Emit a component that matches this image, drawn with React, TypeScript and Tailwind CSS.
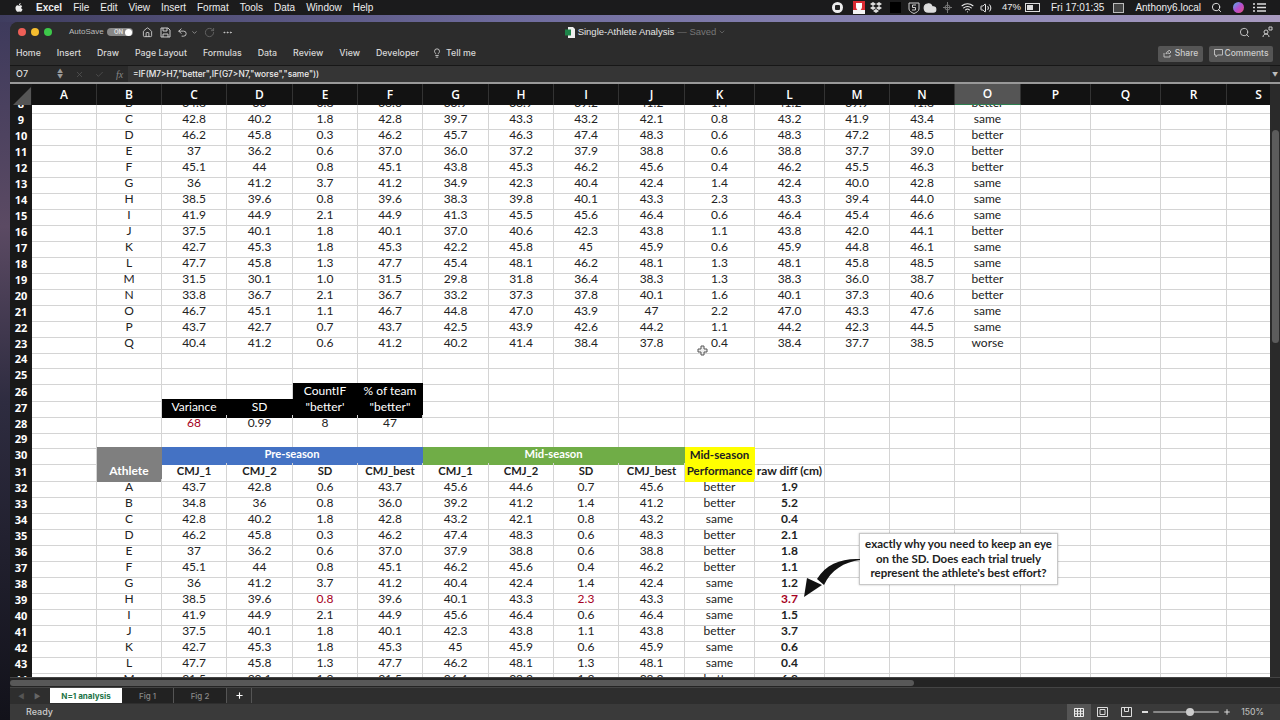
import React from 'react';
import { Home, Undo2, RotateCw, ChevronDown, MoreHorizontal, Lightbulb, Search, X, Check, Volume2, Wifi, Cloud, Plus } from 'lucide-react';

type CellData = { t?: string; c?: string; span?: number };

const COLS = 'grid w-[1312px] grid-cols-[22px_65px_65px_65px_66px_65px_65px_66px_65px_65px_66px_70px_70px_65px_65px_66px_70px_70px_66px_64px]';
const LETTERS = 'ABCDEFGHIJKLMNOPQRS'.split('');
const COUNT = 19;

const TOP: [number, string][] = [
  [8, 'B 34.8 36 0.8 36.0 33.9 36.9 39.2 41.2 1.4 41.2 39.9 41.8 better'],
  [9, 'C 42.8 40.2 1.8 42.8 39.7 43.3 43.2 42.1 0.8 43.2 41.9 43.4 same'],
  [10, 'D 46.2 45.8 0.3 46.2 45.7 46.3 47.4 48.3 0.6 48.3 47.2 48.5 better'],
  [11, 'E 37 36.2 0.6 37.0 36.0 37.2 37.9 38.8 0.6 38.8 37.7 39.0 better'],
  [12, 'F 45.1 44 0.8 45.1 43.8 45.3 46.2 45.6 0.4 46.2 45.5 46.3 better'],
  [13, 'G 36 41.2 3.7 41.2 34.9 42.3 40.4 42.4 1.4 42.4 40.0 42.8 same'],
  [14, 'H 38.5 39.6 0.8 39.6 38.3 39.8 40.1 43.3 2.3 43.3 39.4 44.0 same'],
  [15, 'I 41.9 44.9 2.1 44.9 41.3 45.5 45.6 46.4 0.6 46.4 45.4 46.6 same'],
  [16, 'J 37.5 40.1 1.8 40.1 37.0 40.6 42.3 43.8 1.1 43.8 42.0 44.1 better'],
  [17, 'K 42.7 45.3 1.8 45.3 42.2 45.8 45 45.9 0.6 45.9 44.8 46.1 same'],
  [18, 'L 47.7 45.8 1.3 47.7 45.4 48.1 46.2 48.1 1.3 48.1 45.8 48.5 same'],
  [19, 'M 31.5 30.1 1.0 31.5 29.8 31.8 36.4 38.3 1.3 38.3 36.0 38.7 better'],
  [20, 'N 33.8 36.7 2.1 36.7 33.2 37.3 37.8 40.1 1.6 40.1 37.3 40.6 better'],
  [21, 'O 46.7 45.1 1.1 46.7 44.8 47.0 43.9 47 2.2 47.0 43.3 47.6 same'],
  [22, 'P 43.7 42.7 0.7 43.7 42.5 43.9 42.6 44.2 1.1 44.2 42.3 44.5 same'],
  [23, 'Q 40.4 41.2 0.6 41.2 40.2 41.4 38.4 37.8 0.4 38.4 37.7 38.5 worse'],
];

const BOTTOM: [number, string][] = [
  [32, 'A 43.7 42.8 0.6 43.7 45.6 44.6 0.7 45.6 better 1.9'],
  [33, 'B 34.8 36 0.8 36.0 39.2 41.2 1.4 41.2 better 5.2'],
  [34, 'C 42.8 40.2 1.8 42.8 43.2 42.1 0.8 43.2 same 0.4'],
  [35, 'D 46.2 45.8 0.3 46.2 47.4 48.3 0.6 48.3 better 2.1'],
  [36, 'E 37 36.2 0.6 37.0 37.9 38.8 0.6 38.8 better 1.8'],
  [37, 'F 45.1 44 0.8 45.1 46.2 45.6 0.4 46.2 better 1.1'],
  [38, 'G 36 41.2 3.7 41.2 40.4 42.4 1.4 42.4 same 1.2'],
  [39, 'H 38.5 39.6 0.8 39.6 40.1 43.3 2.3 43.3 same 3.7'],
  [40, 'I 41.9 44.9 2.1 44.9 45.6 46.4 0.6 46.4 same 1.5'],
  [41, 'J 37.5 40.1 1.8 40.1 42.3 43.8 1.1 43.8 better 3.7'],
  [42, 'K 42.7 45.3 1.8 45.3 45 45.9 0.6 45.9 same 0.6'],
  [43, 'L 47.7 45.8 1.3 47.7 46.2 48.1 1.3 48.1 same 0.4'],
  [44, 'M 31.5 30.1 1.0 31.5 36.4 38.3 1.3 38.3 better 6.8'],
];

const RED = 'text-[#a50021]';
const BOLD = 'font-bold text-[11.2px]';
const BLACK = 'bg-black border-black text-white';
const GREY = 'bg-[#7f7f7f] border-[#7f7f7f] text-white font-bold';
const YELLOW = 'bg-[#ffff00] border-[#ffff00] font-bold text-[11.5px]';

const Row = ({ n, cells = [] }: { n: number; cells?: CellData[] }) => {
  const used = cells.reduce((sum, c) => sum + (c.span || 1), 0);
  const all = [...cells, ...Array.from({ length: COUNT - used }, () => ({} as CellData))];
  return (
    <div className={`${COLS} h-4`}>
      <div className="flex items-center justify-center border-b border-[#4a4a4a] bg-[#181818] font-['Open_Sans',sans-serif] text-[11px] font-bold text-white">{n}</div>
      {all.map((c, i) => (
        <div
          key={i}
          className={`flex items-center justify-center whitespace-nowrap border-r border-b ${c.c?.includes('border-') ? '' : 'border-[#d4d4d4]'} ${c.span === 4 ? 'col-span-4' : ''} ${c.c || ''}`}
        >
          <span className="-translate-y-px">{c.t}</span>
        </div>
      ))}
    </div>
  );
};

const topCells = (s: string): CellData[] => [{}, ...s.split(' ').map((t) => ({ t }))];

const bottomCells = (n: number, s: string): CellData[] => {
  const parts = s.split(' ');
  return [
    {},
    ...parts.map((t, i) => {
      let c = i === 10 ? 'font-bold' : '';
      if (n === 39 && (i === 3 || i === 7 || i === 10)) c += ` ${RED}`;
      return { t, c };
    }),
  ];
};

const Sheet = () => (
  <div className="-mt-[10px] font-['Lato',sans-serif] text-[12px] text-[#222]">
    {TOP.map(([n, s]) => <Row key={n} n={n} cells={topCells(s)} />)}
    <Row n={24} />
    <Row n={25} />
    <Row n={26} cells={[{}, {}, {}, {}, { t: 'CountIF', c: BLACK }, { t: '% of team', c: BLACK }]} />
    <Row n={27} cells={[{}, {}, { t: 'Variance', c: BLACK }, { t: 'SD', c: BLACK }, { t: '"better\'', c: BLACK }, { t: '"better"', c: BLACK }]} />
    <Row n={28} cells={[{}, {}, { t: '68', c: RED }, { t: '0.99' }, { t: '8' }, { t: '47' }]} />
    <Row n={29} />
    <Row n={30} cells={[
      {},
      { c: GREY },
      { t: 'Pre-season', span: 4, c: `bg-[#4472c4] border-[#4472c4] text-white ${BOLD}` },
      { t: 'Mid-season', span: 4, c: `bg-[#70ad47] border-[#70ad47] text-white ${BOLD}` },
      { t: 'Mid-season', c: YELLOW },
    ]} />
    <Row n={31} cells={[
      {},
      { t: 'Athlete', c: GREY },
      ...['CMJ_1', 'CMJ_2', 'SD', 'CMJ_best', 'CMJ_1', 'CMJ_2', 'SD', 'CMJ_best'].map((t) => ({ t, c: BOLD })),
      { t: 'Performance', c: YELLOW },
      { t: 'raw diff (cm)', c: 'font-bold' },
    ]} />
    {BOTTOM.map(([n, s]) => <Row key={n} n={n} cells={bottomCells(n, s)} />)}
  </div>
);

const Callout = () => (
  <>
    <div className="absolute left-[849px] top-[428px] flex h-[52px] w-[199px] items-center justify-center border border-[#c8c8c8] bg-white text-center font-['Lato',sans-serif] text-[11.5px] font-bold leading-[14.5px] text-[#222] shadow-[0_0_2px_rgba(0,0,0,0.25)]">
      <span>exactly why you need to keep an eye<br />on the SD. Does each trial truely<br />represent the athlete's best effort?</span>
    </div>
    <svg className="absolute left-[790px] top-[450px]" width="62" height="45" viewBox="0 0 62 45">
      <path d="M60 4 C42 3 26 9 17 24 L24 30 C31 15 44 7 60 5 Z" fill="#111" />
      <path d="M4 42 L7 23 L22 30 Z" fill="#111" />
    </svg>
    <svg className="absolute left-[687px] top-[240px]" width="11" height="11" viewBox="0 0 11 11">
      <path d="M4 1h3v3h3v3H7v3H4V7H1V4h3z" fill="#eee" stroke="#555" strokeWidth="1" />
    </svg>
  </>
);

const MenuBar = () => (
  <div className="flex h-[15px] items-center bg-[#1b1b1c] pl-[14px] pr-[14px] font-['Liberation_Sans',sans-serif] text-[10px] text-[#eee]">
    <svg width="10" height="11" viewBox="0 0 24 24" fill="#eee" className="mr-[12px]">
      <path d="M17.5 12.6c0-2.600 2.100-3.800 2.200-3.900-1.200-1.800-3.100-2-3.700-2-1.600-.2-3.100.9-3.900.9-.8 0-2.100-.9-3.400-.9-1.700 0-3.400 1-4.300 2.600-1.800 3.200-.5 7.900 1.300 10.500.9 1.300 1.900 2.700 3.300 2.600 1.300-.1 1.800-.9 3.400-.9s2 .9 3.400.8c1.400 0 2.300-1.300 3.200-2.600 1-1.500 1.400-2.900 1.400-3-.1 0-2.900-1.100-2.900-4.100zM14.900 4.700c.7-.9 1.200-2.100 1.100-3.300-1 0-2.300.7-3 1.500-.7.8-1.300 2-1.100 3.200 1.100.1 2.300-.6 3-1.400z" />
    </svg>
    <span className="mr-[11px] font-bold">Excel</span>
    <span className="mr-[11px]">File</span>
    <span className="mr-[11px]">Edit</span>
    <span className="mr-[11px]">View</span>
    <span className="mr-[11px]">Insert</span>
    <span className="mr-[11px]">Format</span>
    <span className="mr-[11px]">Tools</span>
    <span className="mr-[11px]">Data</span>
    <span className="mr-[11px]">Window</span>
    <span>Help</span>
    <div className="ml-auto flex items-center">
      <span className="mr-[10px] flex h-[11px] w-[11px] items-center justify-center rounded-full bg-[#eee]"><span className="h-[5px] w-[5px] rounded-[1px] bg-[#222]" /></span>
      <svg width="12" height="13" viewBox="0 0 12 13" className="mr-[5px]"><rect width="12" height="13" fill="#d92a32" /><path d="M3 2h6v4c0 2-1.500 3-3 4C4.500 9 3 8 3 6z" fill="#fff" /><rect y="9" width="12" height="4" fill="#f4f4f4" /></svg>
      <svg width="12" height="11" viewBox="0 0 12 11" fill="#ddd" className="mr-[8px]"><path d="M3 0l3 2-3 2-3-2zM9 0l3 2-3 2-3-2zM3 4l3 2-3 2-3-2zM9 4l3 2-3 2-3-2zM6 7l3 2-3 2-3-2z" /></svg>
      <span className="mr-[7px] h-[11px] w-[11px] bg-black" />
      <svg width="12" height="12" viewBox="0 0 12 12" className="mr-[3px]"><path d="M1 1h10v6c0 2-2.500 3.500-5 4.500C3.500 10.500 1 9 1 7z" fill="none" stroke="#ccc" /><path d="M8 3H4.500v2.500H7.500v2.500H4" fill="none" stroke="#ccc" /></svg>
      <Cloud size={14} fill="#ddd" stroke="#ddd" className="mr-[6px]" />
      <svg width="9" height="11" viewBox="0 0 9 11" className="mr-[9px]"><circle cx="4.500" cy="5.500" r="2.500" fill="none" stroke="#777" /><path d="M4.500 0v11M0 5.500h9" stroke="#777" /></svg>
      <Wifi size={13} className="mr-[6px]" />
      <Volume2 size={12} className="mr-[10px]" />
      <span className="mr-[4px] text-[9.5px]">47%</span>
      <span className="mr-[11px] flex h-[9px] w-[15px] items-center border border-[#ddd] p-px"><span className="h-full w-[6px] bg-[#ddd]" /></span>
      <span className="mr-[9px]">Fri 17:01:35</span>
      <span className="mr-[11px] h-[10px] w-[11px] border border-[#bbb] bg-[#444]" />
      <span className="mr-[10px]">Anthony6.local</span>
      <Search size={11} className="mr-[11px]" />
      <span className="mr-[9px] h-[11px] w-[11px] rounded-full bg-[linear-gradient(135deg,#4fb4e8,#b34fd1,#e8507a)]" />
      <svg width="13" height="9" viewBox="0 0 13 9" stroke="#ddd" strokeWidth="1.300"><path d="M0 1h2M4 1h9M0 4.500h2M4 4.500h9M0 8h2M4 8h9" /></svg>
    </div>
  </div>
);

const TitleBar = () => (
  <div className="grid h-[20px] grid-cols-[1fr_auto_1fr] items-center rounded-tl-lg bg-[#2c2c2c] pl-[8px] pr-[7px] text-[#ccc]">
    <div className="flex items-center">
      <span className="h-[8px] w-[8px] rounded-full bg-[#ee5f57]" />
      <span className="ml-[5px] h-[8px] w-[8px] rounded-full bg-[#f5bd2f]" />
      <span className="ml-[5px] h-[8px] w-[8px] rounded-full bg-[#3dc94a]" />
      <span className="ml-[17px] w-[34px] whitespace-nowrap font-['Liberation_Sans',sans-serif] text-[8px] text-[#bbb]">AutoSave</span>
      <span className="ml-[4px] flex h-[8px] w-[26px] items-center justify-between rounded-full bg-[#888] pl-[7px] pr-px text-[6px] font-bold leading-none text-[#ddd]">ON<span className="h-[7px] w-[7px] rounded-full bg-white" /></span>
      <Home size={11} className="ml-[9px]" />
      <svg width="11" height="11" viewBox="0 0 11 11" fill="none" stroke="#ccc" className="ml-[7px]"><path d="M1 1h7l2 2v7H1z" /><path d="M3 1v3h4V1M3 10V7h5v3" /></svg>
      <Undo2 size={11} className="ml-[6px]" />
      <ChevronDown size={7} className="ml-[3px]" />
      <RotateCw size={11} className="ml-[6px] text-[#666]" />
      <MoreHorizontal size={11} className="ml-[7px]" />
    </div>
    <div className="flex items-center font-['Liberation_Sans',sans-serif] text-[9.5px] text-[#e6e6e6]">
      <svg width="10" height="11" viewBox="0 0 10 11" className="mr-[3px]"><path d="M3 0h5l2 2v9H3z" fill="#eee" /><rect y="2.500" width="6" height="6" fill="#1e8449" /></svg>
      <span>Single-Athlete Analysis</span>
      <span className="ml-[3px] text-[#777]">— Saved</span>
      <ChevronDown size={8} className="ml-[2px] text-[#777]" />
    </div>
    <div className="flex items-center justify-end">
      <Search size={11} className="mr-[12px]" />
      <svg width="11" height="12" viewBox="0 0 11 12" fill="none" stroke="#ccc"><circle cx="4" cy="6" r="2" /><path d="M1 11c0-2 1.500-3 3-3s3 1 3 3M7 1h3v3H7z" /></svg>
    </div>
  </div>
);

const Ribbon = () => (
  <div className="flex h-[23px] items-center bg-[#2c2c2c] pl-[6px] pr-[7px] text-[8.8px] font-medium text-[#d8d8d8]">
    <div className="flex items-center pb-[2px]">
      <span className="mr-[16px]">Home</span>
      <span className="mr-[16px]">Insert</span>
      <span className="mr-[16px]">Draw</span>
      <span className="mr-[16px]">Page Layout</span>
      <span className="mr-[16px]">Formulas</span>
      <span className="mr-[16px]">Data</span>
      <span className="mr-[16px]">Review</span>
      <span className="mr-[16px]">View</span>
      <span className="mr-[13px]">Developer</span>
      <Lightbulb size={10} className="mr-[4px]" />
      <span>Tell me</span>
    </div>
    <span className="ml-auto flex h-[16px] w-[45px] items-center justify-center rounded-[2px] bg-[#555] text-[8.5px] text-[#ccc]">
      <svg width="9" height="9" viewBox="0 0 9 9" fill="none" stroke="#bbb" className="mr-[3px]"><path d="M1 4v4h6V6M3 5c0-2 2-3 3-3V1l2 2-2 2V4C5 4 4 4 3 5z" /></svg>
      Share
    </span>
    <span className="ml-[6px] flex h-[16px] w-[64px] items-center justify-center rounded-[2px] bg-[#555] text-[8.5px] text-[#ccc]">
      <svg width="9" height="9" viewBox="0 0 9 9" fill="none" stroke="#bbb" className="mr-[2px]"><path d="M.5.500h8v5.500H3.500L2 8V6H.5z" /></svg>
      Comments
    </span>
  </div>
);

const FormulaBar = () => (
  <div className="flex h-[17px] items-center border-t border-[#171717] bg-[#2a2a2a] text-[9px] font-medium text-[#ddd]">
    <span className="ml-[6px] w-[39px]">O7</span>
    <span className="flex w-[10px] flex-col items-center text-[6px] leading-[6px] text-[#999]"><span>▲</span><span>▼</span></span>
    <X size={9} className="ml-[10px] text-[#555]" />
    <Check size={9} className="ml-[11px] text-[#555]" />
    <span className="ml-[12px] w-[9px] font-['Liberation_Serif',serif] text-[10px] italic text-[#888]">fx</span>
    <div className="ml-[3px] flex h-full flex-1 items-center bg-[#353535] pl-[5px] text-[8.3px] text-[#eee]">=IF(M7&gt;H7,"better",IF(G7&gt;N7,"worse","same"))</div>
    <span className="flex w-[10px] justify-center text-[6px] text-[#bbb]">▼</span>
  </div>
);

const ColumnHeader = () => (
  <div className="flex border-t-2 border-[#999] bg-[#2a2a2a]">
    <div className="w-[1260px] overflow-hidden">
      <div className={`${COLS} h-[21px] font-['Open_Sans',sans-serif] text-[12px] font-semibold text-white`}>
        <div className="flex items-center justify-center bg-[#181818] pl-[2px] pt-[2px]">
          <svg width="18" height="18" viewBox="0 0 18 18"><path d="M18 0v18H0z" fill="#555" /></svg>
        </div>
        {LETTERS.map((l) => (
          <div key={l} className={`flex items-center justify-center border-r border-[#333] ${l === 'O' ? 'border-b border-b-[#2e7d4f] bg-[#555]' : 'bg-[#121212]'}`}>{l}</div>
        ))}
      </div>
    </div>
    <div className="flex-1" />
  </div>
);

const BottomBars = () => (
  <>
    <div className="h-[10px] border-t border-[#444] bg-[#242424] pr-[366px] pt-[2px]">
      <div className="h-[6px] rounded-full bg-[#585858]" />
    </div>
    <div className="flex h-[17px] items-start border-t border-[#444] bg-[#2e2e2e] text-[8px] font-medium text-[#888]">
      <span className="ml-[8px] mt-[4px] w-[16px] text-[7px] text-[#555]">◀</span>
      <span className="mt-[4px] w-[16px] text-[7px] text-[#666]">▶</span>
      <span className="flex h-[15px] w-[72px] items-center justify-center bg-white font-bold text-[#217346]">N=1 analysis</span>
      <span className="flex h-[15px] w-[52px] items-center justify-center border-r border-[#555] bg-[#222]">Fig 1</span>
      <span className="flex h-[15px] w-[53px] items-center justify-center border-r border-[#555] bg-[#222]">Fig 2</span>
      <span className="flex h-[15px] w-[25px] items-center justify-center border-r border-[#555] text-white"><Plus size={9} strokeWidth={3} /></span>
    </div>
    <div className="flex h-[16px] items-center bg-[#3a3a3a] pl-[16px] text-[9px] font-medium text-[#ccc]">
      Ready
      <div className="ml-auto flex h-full items-center">
        <span className="flex h-full w-[24px] items-center justify-center bg-[#555]">
          <svg width="10" height="9" viewBox="0 0 10 9" fill="none" stroke="#eee"><path d="M.5.500h9v8h-9zM3.500.500v8M6.500.500v8M.500 3.200h9M.500 5.800h9" /></svg>
        </span>
        <svg width="11" height="10" viewBox="0 0 11 10" fill="none" stroke="#ddd" className="ml-[6px]"><path d="M.5.500h10v9H.500z" /><path d="M3 2.500h5v5H3z" /></svg>
        <svg width="11" height="10" viewBox="0 0 11 10" fill="none" stroke="#ddd" className="ml-[13px]"><path d="M.5.500h10v9H.500z" /><path d="M3.500.500v4h4v-4" /></svg>
        <span className="ml-[10px] h-[1.5px] w-[6px] bg-[#ddd]" />
        <span className="relative ml-[5px] h-[2px] w-[66px] rounded bg-[#888]">
          <span className="absolute left-[33px] top-[-3px] h-[8px] w-[8px] rounded-full bg-[#ccc]" />
        </span>
        <Plus size={8} strokeWidth={3} className="ml-[4px] text-[#ddd]" />
        <span className="ml-[10px] mr-[16px] text-[8.5px] text-[#bbb]">150%</span>
      </div>
    </div>
  </>
);

export default function App() {
  return (
    <div className="flex h-[720px] w-[1280px] flex-col overflow-hidden bg-[#14141c] font-['Inter',sans-serif]">
      <MenuBar />
      <div className="flex-1 overflow-hidden bg-[linear-gradient(180deg,#3d3a5c_0%,#5b4a63_30%,#2e2c40_55%,#12121a_100%)] pl-[10px]">
        <div className="-ml-[10px] h-[7px] bg-[linear-gradient(90deg,#3f3d5f,#6f6c9e_40%,#8f8ab8_75%,#a89abf)]" />
        <div className="flex h-[698px] flex-col overflow-hidden rounded-tl-lg bg-[#2c2c2c]">
          <TitleBar />
          <Ribbon />
          <FormulaBar />
          <ColumnHeader />
          <div className="relative flex h-[572px]">
            <div className="h-full w-[1260px] overflow-hidden bg-white">
              <Sheet />
            </div>
            <div className="flex-1 bg-[#2a2a2a] pl-[2px] pt-[25px]">
              <div className="h-[213px] w-[7px] rounded-full bg-[#5c5c5c]" />
            </div>
            <Callout />
          </div>
          <BottomBars />
        </div>
      </div>
    </div>
  );
}
